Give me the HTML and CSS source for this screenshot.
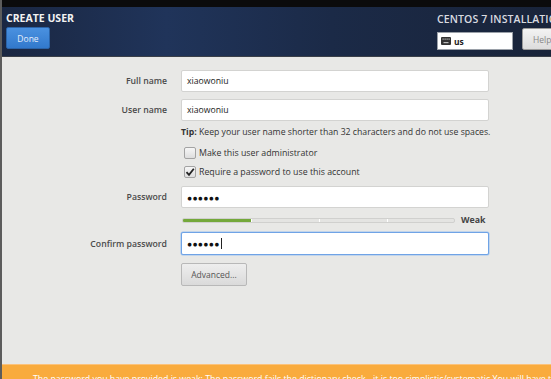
FILE: index.html
```html
<!DOCTYPE html>
<html>
<head>
<meta charset="utf-8">
<link rel="stylesheet" href="styles.css">
</head>
<body>
<div class="page">
  <div class="topstrip"></div>
  <header class="header">
    <div class="hleft">
      <div class="htitle">CREATE USER</div>
      <button class="done">Done</button>
    </div>
    <div class="hright">
      <div class="htitle product">CENTOS 7 INSTALLATION</div>
      <div class="hrow">
        <div class="kbd">
          <svg class="kbdicon" width="10" height="8" viewBox="0 0 10 8"><rect x="0" y="0" width="10" height="8" rx="1" fill="#333"/><rect x="1.5" y="1.5" width="1.2" height="1.2" fill="#bbb"/><rect x="3.5" y="1.5" width="1.2" height="1.2" fill="#bbb"/><rect x="5.5" y="1.5" width="1.2" height="1.2" fill="#bbb"/><rect x="7.5" y="1.5" width="1.2" height="1.2" fill="#bbb"/><rect x="2.5" y="5" width="5" height="1.2" fill="#bbb"/></svg>
          <span class="kbdtext">us</span>
        </div>
        <button class="help">Help!</button>
      </div>
    </div>
  </header>
  <main class="content">
    <div class="row r1"><label class="lbl">Full name</label><div class="input">xiaowoniu</div></div>
    <div class="row r2"><label class="lbl">User name</label><div class="input">xiaowoniu</div></div>
    <div class="row rtip"><span></span><div class="tip"><b>Tip:</b> Keep your user name shorter than 32 characters and do not use spaces.</div></div>
    <div class="row rchk"><span></span><div class="check"><span class="box"></span><span>Make this user administrator</span></div></div>
    <div class="row rchk"><span></span><div class="check"><span class="box checked"><svg width="10" height="10" viewBox="0 0 10 10"><path d="M1.5 5.2 L4 7.8 L8.8 1.8" fill="none" stroke="#222" stroke-width="1.8"/></svg></span><span>Require a password to use this account</span></div></div>
    <div class="row rpw"><label class="lbl">Password</label><div class="input dots">&#9679;&#9679;&#9679;&#9679;&#9679;&#9679;</div></div>
    <div class="row rbar"><span></span><div class="strength"><div class="bar"><div class="fill"></div><i class="tick t1"></i><i class="tick t2"></i><i class="tick t3"></i></div><span class="weak">Weak</span></div></div>
    <div class="row rconf"><label class="lbl">Confirm password</label><div class="input dots focus">&#9679;&#9679;&#9679;&#9679;&#9679;&#9679;<span class="caret"></span></div></div>
    <div class="row radv"><span></span><div><button class="adv">Advanced...</button></div></div>
  </main>
  <footer class="warn">The password you have provided is weak: The password fails the dictionary check - it is too simplistic/systematic You will have to press Done twice to confirm it.</footer>
</div>
</body>
</html>
```
FILE: styles.css
```css
* { box-sizing: border-box; }
html, body { margin: 0; padding: 0; }
body {
  width: 551px;
  height: 379px;
  overflow: hidden;
  font-family: "Open Sans", "Noto Sans", sans-serif;
  background: #e8e8e6;
}
.page {
  width: 551px;
  height: 379px;
  display: flex;
  flex-direction: column;
  border-left: 2px solid #5c5c5c;
  overflow: hidden;
}
.topstrip { height: 7px; background: #0b0b0c; flex: none; }
.header {
  height: 50px;
  flex: none;
  display: flex;
  justify-content: space-between;
  background: linear-gradient(90deg, #1a2742 0%, #20345a 30%, #1b2a47 60%, #19243a 100%);
  border-bottom: 1px solid #3a3f48;
  overflow: hidden;
  white-space: nowrap;
}
.hleft { padding: 5px 0 0 4px; display: flex; flex-direction: column; }
.htitle {
  color: #f2f2f2;
  font-weight: 700;
  font-size: 10.5px;
  line-height: 12px;
  height: 15px;
}
.product { font-weight: 600; color: #d9dbe0; letter-spacing: 0.1px; }
.done {
  width: 44px;
  height: 22px;
  border: 1px solid #2a63a8;
  border-radius: 2px;
  background: linear-gradient(#4a91e0, #3279cc);
  color: #e6eefa;
  font-family: inherit;
  font-size: 8.5px;
  padding: 0;
}
.hright { padding: 6px 0 0 1px; width: 115px; flex: none; display: flex; flex-direction: column; }
.hrow { display: flex; align-items: center; gap: 9px; margin-top: 3px; }
.kbd {
  width: 76px;
  height: 18px;
  background: #fff;
  border: 1px solid #9aa0a8;
  display: flex;
  align-items: center;
  padding-left: 3px;
  gap: 3px;
  margin-top: 1px;
  flex: none;
}
.kbdtext { font-size: 8.5px; font-weight: 700; color: #222; }
.help {
  flex: none;
  width: 40px;
  height: 22px;
  margin-top: -3px;
  background: linear-gradient(#f3f3f3, #dcdcdc);
  border: 1px solid #9a9a9a;
  border-radius: 2px;
  color: #888;
  font-family: inherit;
  font-size: 8.5px;
  padding: 0 0 0 10px;
  text-align: left;
}
.content {
  flex: 1;
  padding-top: 13px;
  display: flex;
  flex-direction: column;
}
.row {
  display: grid;
  grid-template-columns: 165px 308px;
  column-gap: 14px;
  align-items: center;
}
.lbl {
  text-align: right;
  font-size: 8.7px;
  font-weight: 600;
  color: #4a4a4a;
}
.input {
  height: 22px;
  background: #fff;
  border: 1px solid #d3d3d1;
  border-radius: 2px;
  font-size: 8.7px;
  color: #222;
  padding-left: 5px;
  display: flex;
  align-items: center;
}
.r2 { margin-top: 7px; }
.rtip { height: 22px; }
.tip { font-size: 8.7px; color: #333; white-space: nowrap; }
.tip b { font-weight: 700; }
.rchk { height: 19px; }
.check { display: flex; align-items: center; gap: 3px; font-size: 8.8px; color: #333; padding-left: 3px; white-space: nowrap; }
.box {
  width: 12px;
  height: 12px;
  border: 1px solid #a3a3a3;
  border-radius: 2px;
  background: linear-gradient(#f6f6f6, #dedede);
  display: flex;
  align-items: center;
  justify-content: center;
}
.rpw { margin-top: 5px; }
.dots { font-size: 8.5px; letter-spacing: 0.3px; color: #111; }
.rbar { height: 24px; }
.strength { display: flex; align-items: center; gap: 6px; padding-left: 1px; }
.bar {
  position: relative;
  width: 273px;
  height: 5px;
  border: 1px solid #d0d0ce;
  border-radius: 2px;
  background: #e4e4e2;
  overflow: hidden;
}
.fill { width: 68px; height: 100%; background: #74a83a; }
.tick { position: absolute; top: 0; width: 1px; height: 100%; background: #fff; }
.t1 { left: 68px; } .t2 { left: 136px; } .t3 { left: 204px; }
.weak { font-size: 8.8px; font-weight: 700; color: #444; }
.rconf .input { height: 23px; }
.focus { border: 1px solid #6fa3e6; box-shadow: 0 0 0 0.5px #9cc1ef; }
.caret { display: inline-block; width: 1px; height: 11px; background: #222; margin-left: 1px; }
.radv { margin-top: 6px; }
.adv {
  width: 66px;
  height: 23px;
  background: linear-gradient(#eeeeee, #dadada);
  border: 1px solid #b8b8b8;
  border-radius: 2px;
  font-family: inherit;
  font-size: 8.5px;
  color: #555;
  padding: 0;
}
.warn {
  flex: none;
  height: 15px;
  background: #f9ab3d;
  border-top: 1px solid #fcc27a;
  color: #fff;
  font-size: 8.8px;
  padding: 8px 0 0 31px;
  white-space: nowrap;
  overflow: hidden;
  line-height: 12px;
}
```
